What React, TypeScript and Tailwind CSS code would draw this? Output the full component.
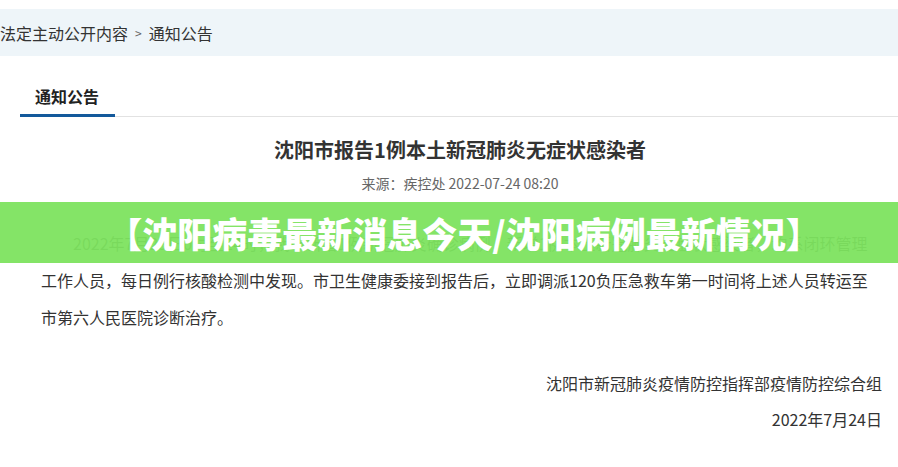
export default function App() {
  const font = { fontFamily: '"Microsoft YaHei", "Noto Sans CJK SC", "Noto Sans", sans-serif' };

  return (
    <div className="relative w-[898px] h-[467px] overflow-hidden bg-white text-[#333]" style={font}>
      {/* Breadcrumb */}
      <div className="mt-[9px] h-[47px] bg-[#eef5f9] flex items-center text-[16px] text-[#333]">
        <span>法定主动公开内容</span>
        <span className="mx-[7px] text-[12px] text-[#666]">&gt;</span>
        <span>通知公告</span>
      </div>

      {/* Tab */}
      <div className="ml-[20px] mt-[28px] flex border-b border-[#e2e2e2]">
        <div className="w-[95px] pl-[15px] pb-[6px] border-b-[3px] border-[#13599b] -mb-px text-[16px] font-bold text-[#222]">
          通知公告
        </div>
      </div>

      {/* Article */}
      <div className="ml-[20px] w-[880px]">
        <h1 className="mt-[18px] text-center text-[20px] font-bold leading-[30px] text-[#333]">
          沈阳市报告1例本土新冠肺炎无症状感染者
        </h1>
        <div className="mt-[6px] text-center text-[14px] leading-[24px] text-[#666]">
          来源：疾控处 2022-07-24 08:20
        </div>

        <p className="mt-[30px] pl-[21px] pr-[19px] text-[16px] leading-[37px] text-[#333] indent-[32px]">
          2022年7月23日0时至24时，我市新增1例新冠肺炎确诊病例，新增1例本土新冠肺炎无症状感染者，均系闭环管理工作人员，每日例行核酸检测中发现。市卫生健康委接到报告后，立即调派120负压急救车第一时间将上述人员转运至市第六人民医院诊断治疗。
        </p>

        <div className="mt-[29px] pr-[18px] text-right text-[16px] leading-[36px] text-[#333]">
          <div>沈阳市新冠肺炎疫情防控指挥部疫情防控综合组</div>
          <div>2022年7月24日</div>
        </div>
      </div>

      {/* Overlay banner */}
      <div className="absolute left-0 top-[202px] w-full h-[61px] bg-[#7de35f]/95 flex items-center justify-center pl-[30px]">
        <span className="text-white text-[35px] font-black leading-none">
          【沈阳病毒最新消息今天/沈阳病例最新情况】
        </span>
      </div>
    </div>
  );
}
